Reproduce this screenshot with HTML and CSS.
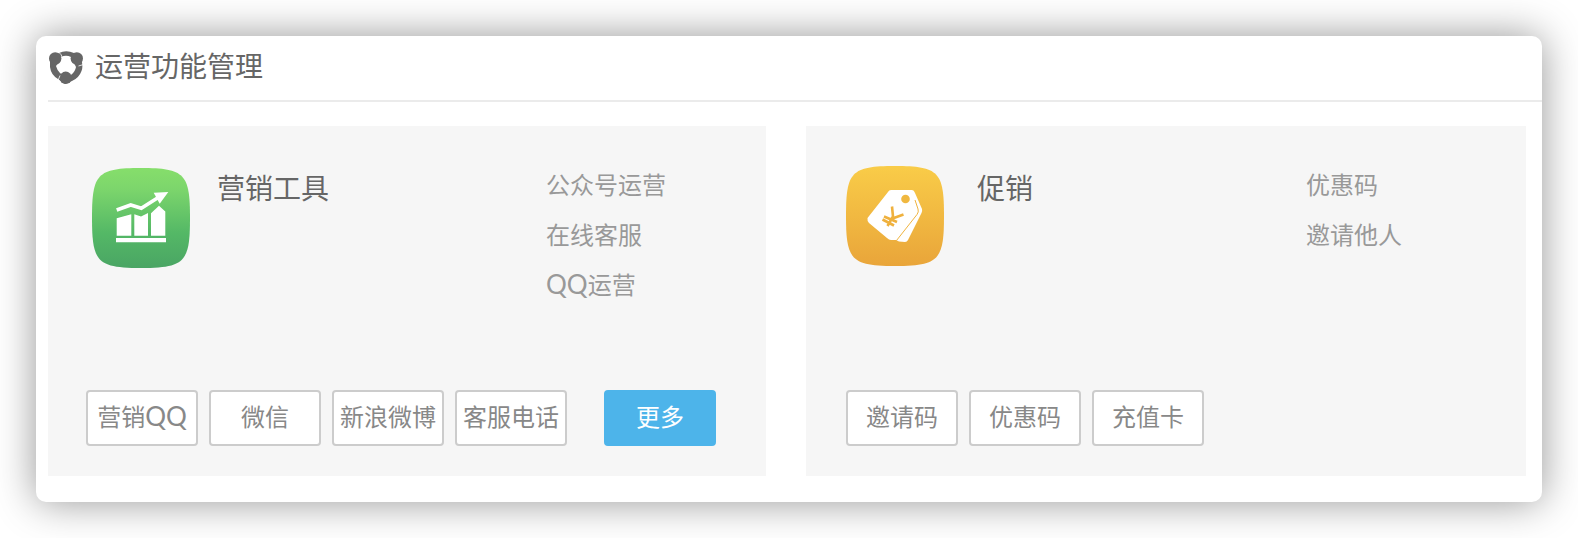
FILE: index.html
```html
<!DOCTYPE html>
<html lang="zh-CN">
<head>
<meta charset="utf-8">
<title>运营功能管理</title>
<link rel="stylesheet" href="styles.css">
</head>
<body>
<main class="card">
  <header class="card-header">
    <svg class="logo" viewBox="0 0 36 36" aria-hidden="true">
      <path fill="#666" fill-rule="evenodd" d="M11 3Q18 -.5 26 3L33 9Q35.500 16 33.500 21Q31 28 24 31L17 34L10 29Q3 25 2 17V9ZM13 7Q18 4.500 23 7L27 15L28 17Q27 22 23.500 24.500L18 28L12 23Q9 20 8 16L11 12Z"/>
      <g fill="#666">
        <circle cx="7.200" cy="8.500" r="6.200"/>
        <circle cx="28.800" cy="8.500" r="6.200"/>
        <circle cx="17.700" cy="27.800" r="6.200"/>
      </g>
      <path d="M11 2.500q2.800 2 3.200 5M35.500 14.500l-5 1.500M10 30.500l2-5" fill="none" stroke="#fff" stroke-width=".8"/>
    </svg>
    <h1 class="card-title">运营功能管理</h1>
  </header>
  <div class="panels">
    <section class="panel panel-tools">
      <div class="panel-head">
        <svg class="app-icon" viewBox="0 0 104 104" aria-hidden="true">
          <defs>
            <linearGradient id="green" x1="0" y1="0" x2="0" y2="1">
              <stop offset="0" stop-color="#86de6b"/>
              <stop offset=".2" stop-color="#7dd66c"/>
              <stop offset=".65" stop-color="#54b866"/>
              <stop offset="1" stop-color="#4aa564"/>
            </linearGradient>
          </defs>
          <path fill="url(#green)" d="M6 52C6 8 11 2 55 2S104 8 104 52S99 102 55 102S6 96 6 52Z"/>
          <g fill="#fff">
            <path d="M30.700 52.300L45.300 48.300V69.700H30.700ZM48.300 48.300L55 50.500L62 47V69.700H48.300ZM65 47.300L73 39.700L79.300 45.500V69.700H65ZM30 72H80V76.300H30Z"/>
            <path d="M67.700 26.700L82.300 26L73.700 37.700Z"/>
          </g>
          <path d="M30.700 44L44.700 39L55.300 42.300L73 31" fill="none" stroke="#fff" stroke-width="3.600"/>
        </svg>
        <h2 class="panel-title">营销工具</h2>
        <ul class="features">
          <li>公众号运营</li>
          <li>在线客服</li>
          <li><span class="latin">QQ</span>运营</li>
        </ul>
      </div>
      <div class="actions">
        <button class="btn" type="button">营销<span class="latin">QQ</span></button>
        <button class="btn" type="button">微信</button>
        <button class="btn" type="button">新浪微博</button>
        <button class="btn" type="button">客服电话</button>
        <button class="btn btn-more" type="button">更多</button>
      </div>
    </section>
    <section class="panel">
      <div class="panel-head">
        <svg class="app-icon" viewBox="0 0 104 104" aria-hidden="true">
          <defs>
            <linearGradient id="amber" x1="0" y1="0" x2="0" y2="1">
              <stop offset="0" stop-color="#f9cc48"/>
              <stop offset="1" stop-color="#e9a53a"/>
            </linearGradient>
          </defs>
          <path fill="url(#amber)" d="M0 50C0 6 5 0 49 0S98 6 98 50S93 100 49 100S0 94 0 50Z"/>
          <path fill="#fff" d="M45 24H66Q68 24 69 27L76 43Q76.500 45 75.500 47L62 74Q61 76 59 76L53 75.500L50 74H45Q43 74 41 72L23 57Q21 55 21.500 52L42 26Q43 24 45 24Z"/>
          <path d="M50.500 74.500L71 48.500Q73 46 72 43L69 34" fill="none" stroke="#f0b43f" stroke-width="1"/>
          <circle cx="59.500" cy="33" r="4.300" fill="#f0b840"/>
          <path d="M46 40.500L47 50.500L41.500 60M57.500 48.500L46.500 52.500M38 50.500L51 56M36.500 53.500L48 59.500" fill="none" stroke="#efb13e" stroke-width="2.600"/>
        </svg>
        <h2 class="panel-title">促销</h2>
        <ul class="features">
          <li>优惠码</li>
          <li>邀请他人</li>
        </ul>
      </div>
      <div class="actions">
        <button class="btn" type="button">邀请码</button>
        <button class="btn" type="button">优惠码</button>
        <button class="btn" type="button">充值卡</button>
      </div>
    </section>
  </div>
</main>
</body>
</html>
```
FILE: styles.css
```css
* {
  box-sizing: border-box;
}

body {
  margin: 0;
  padding: 36px;
  background: #fff;
  font-family: "Noto Sans CJK SC", sans-serif;
  font-size: 24px;
  color: #999;
}

h1,
h2,
ul {
  margin: 0;
  padding: 0;
  font-weight: 400;
}

.card {
  background: #fff;
  border-radius: 10px;
  box-shadow: 0 0 40px rgba(0, 0, 0, 0.42);
}

.card-header {
  display: flex;
  align-items: center;
  gap: 11px;
  margin-left: 12px;
  height: 66px;
  border-bottom: 2px solid #ebebeb;
}

.logo {
  width: 36px;
  height: 36px;
}

.card-title,
.panel-title {
  font-size: 28px;
  line-height: 56px;
  color: #666;
}

.card-title {
  padding-bottom: 6px;
}

.panels {
  display: grid;
  grid-template-columns: 359fr 360fr;
  gap: 40px;
  padding: 24px 16px 26px 12px;
}

.panel {
  display: flex;
  flex-direction: column;
  justify-content: space-between;
  gap: 81px;
  padding: 33px 40px 30px;
  background: #f6f6f6;
}

.panel-tools {
  padding-left: 38px;
}

.panel-head {
  display: grid;
  grid-template-columns: 131px 329px 1fr;
  align-items: start;
}

.app-icon {
  width: 104px;
  height: 104px;
  margin-top: 7px;
}

.features {
  list-style: none;
  line-height: 50px;
  white-space: nowrap;
}

.latin {
  font-family: Lato, sans-serif;
  font-size: 26px;
  font-weight: 400;
  line-height: 1;
}

.actions {
  display: flex;
  gap: 11px;
}

.btn {
  width: 112px;
  height: 56px;
  padding: 0 0 4px;
  border: 2px solid #ccc;
  border-radius: 4px;
  background: #fff;
  font-family: inherit;
  font-size: 24px;
  line-height: 48px;
  color: #888;
  white-space: nowrap;
  cursor: pointer;
}

.btn-more {
  margin-left: 26px;
  border-color: #4db4ea;
  background: #4db4ea;
  color: #fff;
}
```
